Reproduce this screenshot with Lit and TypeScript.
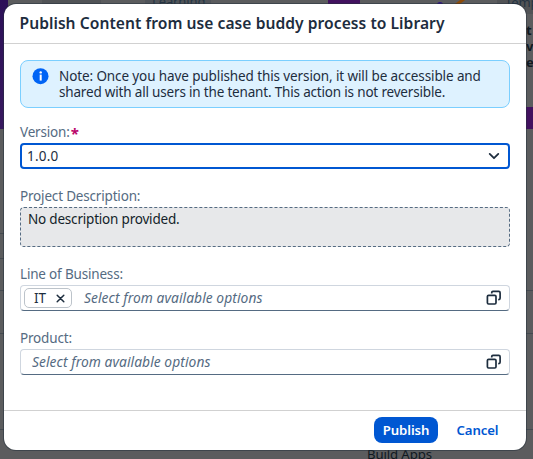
import { LitElement, html, css, svg } from "lit";
import { customElement, property } from "lit/decorators.js";

const valueHelpIcon = svg`
  <svg class="icon" width="16" height="16" viewBox="0 0 16 16" fill="none" stroke="#1d2d3e" stroke-width="1.7">
    <rect x="1.4" y="5.4" width="8.6" height="8.6" rx="1.2"></rect>
    <path d="M5.7 3.6V2.7Q5.7 1.4 7 1.4H12.8Q14.1 1.4 14.1 2.8V8.2Q14.1 9.6 12.2 9.7"></path>
  </svg>`;

@customElement("form-field")
class FormField extends LitElement {
  @property() label = "";
  @property({ type: Boolean }) required = false;

  static styles = css`
    :host { display: flex; flex-direction: column; }
    .label {
      display: flex;
      height: 22px;
      line-height: 23px;
      font-size: 13.5px;
      letter-spacing: -0.18px;
      color: #556b82;
      white-space: nowrap;
    }
    .star { color: #ba066c; font-weight: 700; font-size: 15px; margin-left: 1px; line-height: 24px; }
  `;

  render() {
    return html`
      <div class="label">${this.label}${this.required ? html`<span class="star">*</span>` : ""}</div>
      <slot></slot>
    `;
  }
}

@customElement("app-root")
class AppRoot extends LitElement {
  static styles = css`
    :host {
      display: block;
      position: relative;
      width: 533px;
      height: 459px;
      overflow: hidden;
      background: #5b5c5e;
      font-family: "Noto Sans", sans-serif;
      font-size: 13.5px;
      letter-spacing: -0.12px;
      color: #1d2d3e;
    }
    * { box-sizing: border-box; }
    .behind { position: absolute; white-space: nowrap; }
    .purple-left { left: 0; top: 0; width: 8px; height: 129px; background: linear-gradient(#2c1058, #38195f); }
    .chip-a { left: 42px; top: 0; width: 59px; height: 5px; background: #515356; }
    .chip-b { left: 145px; top: 0; width: 66px; height: 5px; background: #505459; }
    .purple-top { left: 328px; top: 0; width: 32px; height: 5px; background: #42115f; }
    .purple-right { left: 525px; top: 107px; width: 8px; height: 22px; background: #42115f; }
    .art { left: 436px; top: 0; }
    .chip-c { left: 497px; top: 0; width: 36px; height: 14px; background: #515356; }
    .learning { left: 152px; top: -8px; font-size: 13px; line-height: 18px; color: #253443; }
    .temp { left: 505px; top: -7px; font-size: 13px; line-height: 18px; color: #253443; }
    .side { left: 526px; top: 22px; font-size: 13px; font-weight: 700; line-height: 16px; color: #101921; }
    .apps { left: 367px; top: 445px; font-size: 13.2px; line-height: 18px; color: #101921; }
    .rule { left: 0; width: 533px; height: 1px; background: #444a50; }
    .r1 { top: 233px; width: 5px; }
    .r2 { top: 258px; width: 5px; }
    .r3 { top: 290px; }
    .r4 { top: 333px; }
    .r5 { top: 429px; }

    .dialog {
      position: absolute;
      left: 4px;
      top: 4px;
      width: 522px;
      height: 446px;
      display: flex;
      flex-direction: column;
      background: #fff;
      border-radius: 12px;
      box-shadow: 0 0 0 1px rgba(34, 45, 58, 0.5);
    }
    .header {
      height: 40px;
      padding: 0 15.5px;
      border-bottom: 1px solid #d1d1d1;
      line-height: 39px;
      font-size: 15.6px;
      letter-spacing: 0.05px;
      font-weight: 600;
      white-space: nowrap;
    }
    .body { flex: 1; padding: 16px 16px 0; }
    .note {
      display: flex;
      gap: 10px;
      height: 48px;
      padding: 7px 12px 0 11px;
      border: 1px solid #7bcfff;
      border-radius: 8px;
      background: #def2ff;
      line-height: 16px;
      white-space: nowrap;
    }
    .note svg { flex: none; }
    .n1 { letter-spacing: -0.11px; }
    .n2 { letter-spacing: -0.18px; }
    form-field { display: flex; }
    .f1 { margin-top: 13px; }
    .f2 { margin-top: 16px; }
    .f3 { margin-top: 16px; }
    .select {
      height: 26px;
      display: flex;
      align-items: center;
      justify-content: space-between;
      padding: 0 7px 0 5px;
      border: 2px solid #0057d2;
      border-radius: 4px;
    }
    .ver { letter-spacing: 0.2px; }
    .desc {
      height: 40px;
      padding: 2px 8px 2px 7px;
      line-height: 18px;
      letter-spacing: -0.2px;
      border: 1px dashed #556b82;
      border-radius: 4px;
      background: #e7e8ea;
      color: #131e29;
    }
    .input {
      height: 26px;
      display: flex;
      align-items: center;
      padding: 0 7px 0 3px;
      border: 1px solid #cfd6df;
      border-bottom-color: #556b82;
      border-radius: 4px;
    }
    .token {
      width: 48px;
      height: 20px;
      display: flex;
      align-items: center;
      justify-content: space-between;
      padding: 0 6px 0 9px;
      border: 1px solid #bcc3ca;
      border-radius: 5px;
      margin-right: 4px;
    }
    .placeholder {
      flex: 1;
      padding-left: 8px;
      line-height: 18px;
      padding-bottom: 1px;
      font-size: 13.8px;
      letter-spacing: 0.07px;
      font-style: italic;
      color: #556b82;
      white-space: nowrap;
    }
    .footer {
      height: 40px;
      display: flex;
      justify-content: flex-end;
      align-items: flex-start;
      gap: 8px;
      padding: 6px 16px 0;
      border-top: 1px solid #d1d1d1;
    }
    .btn {
      height: 26px;
      border: 0;
      border-radius: 8px;
      padding: 0;
      font: 600 13.2px/26px "Noto Sans", sans-serif;
      letter-spacing: -0.1px;
      background: none;
      color: #0057d2;
      text-align: center;
    }
    .primary { width: 64px; background: #0057d2; color: #fff; }
    .cancel { width: 63px; margin-right: 1px; }
  `;

  render() {
    return html`
      <div class="behind purple-left"></div>
      <div class="behind chip-a"></div>
      <div class="behind chip-b"></div>
      <div class="behind purple-top"></div>
      <div class="behind chip-c"></div>
      <div class="behind purple-right"></div>
      <svg class="behind art" width="30" height="6" viewBox="0 0 30 6">
        <circle cx="4" cy="5" r="3" fill="#311683"></circle>
        <path d="M20 5L28-1" stroke="#8c4a08" stroke-width="3"></path>
      </svg>
      <div class="behind learning">Learning</div>
      <div class="behind temp">Temp</div>
      <div class="behind side">t<br />v<br />e</div>
      <div class="behind apps">Build Apps</div>
      <div class="behind rule r1"></div>
      <div class="behind rule r2"></div>
      <div class="behind rule r3"></div>
      <div class="behind rule r4"></div>
      <div class="behind rule r5"></div>

      <section class="dialog">
        <header class="header">Publish Content from use case buddy process to Library</header>
        <div class="body">
          <div class="note">
            <svg width="17" height="17" viewBox="0 0 17 17">
              <circle cx="8.5" cy="8.2" r="8" fill="#0064f5"></circle>
              <circle cx="8.7" cy="4.4" r="1.2" fill="#fff"></circle>
              <rect x="7.7" y="6.6" width="2" height="6" fill="#fff"></rect>
            </svg>
            <div>
              <div class="n1">Note: Once you have published this version, it will be accessible and</div>
              <div class="n2">shared with all users in the tenant. This action is not reversible.</div>
            </div>
          </div>
          <form-field class="f1" label="Version:" required>
            <div class="select">
              <span class="ver">1.0.0</span>
              <svg width="14" height="14" viewBox="0 0 14 14" fill="none" stroke="#1d2d3e" stroke-width="1.8" stroke-linecap="round" stroke-linejoin="round">
                <path d="M2.7 4.9L7 9.2L11.3 4.9"></path>
              </svg>
            </div>
          </form-field>
          <form-field class="f2" label="Project Description:">
            <div class="desc">No description provided.</div>
          </form-field>
          <form-field class="f3" label="Line of Business:">
            <div class="input">
              <span class="token">IT
                <svg width="9" height="9" viewBox="0 0 9 9" stroke="#1d2d3e" stroke-width="1.5" stroke-linecap="round">
                  <path d="M1.2 1.2L7.8 7.8M7.8 1.2L1.2 7.8"></path>
                </svg>
              </span>
              <span class="placeholder">Select from available options</span>
              ${valueHelpIcon}
            </div>
          </form-field>
          <form-field class="f3" label="Product:">
            <div class="input">
              <span class="placeholder">Select from available options</span>
              ${valueHelpIcon}
            </div>
          </form-field>
        </div>
        <footer class="footer">
          <button class="btn primary">Publish</button>
          <button class="btn cancel">Cancel</button>
        </footer>
      </section>
    `;
  }
}
